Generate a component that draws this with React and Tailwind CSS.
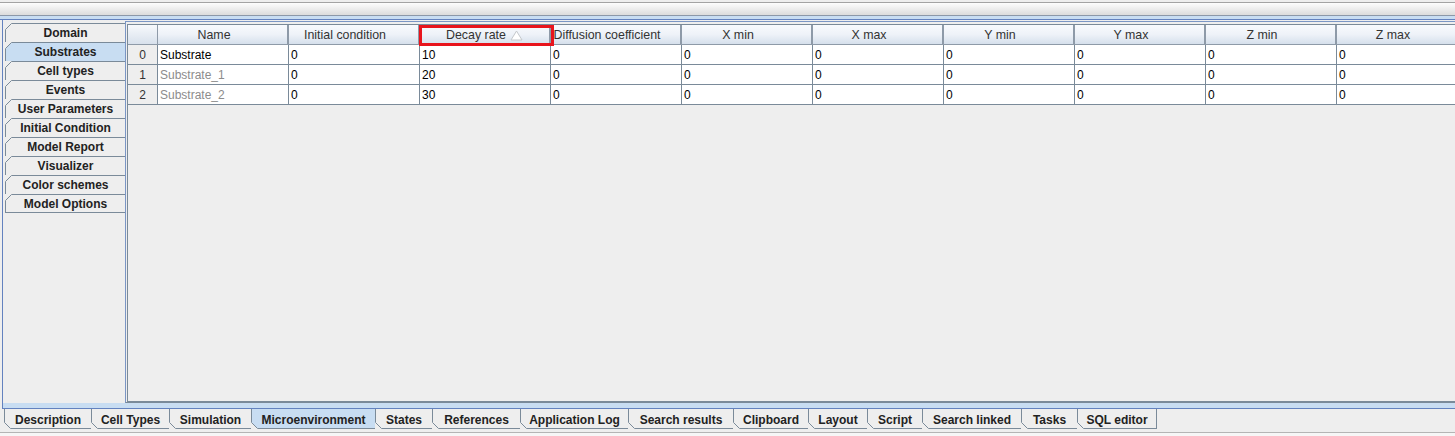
import React from 'react'

const sideTabs = ['Domain', 'Substrates', 'Cell types', 'Events', 'User Parameters', 'Initial Condition', 'Model Report', 'Visualizer', 'Color schemes', 'Model Options']

const bottomTabs = [
  { label: 'Description', w: 'w-[87px]' },
  { label: 'Cell Types', w: 'w-[78px]' },
  { label: 'Simulation', w: 'w-[82px]' },
  { label: 'Microenvironment', w: 'w-[124px]', selected: true },
  { label: 'States', w: 'w-[57px]' },
  { label: 'References', w: 'w-[88px]' },
  { label: 'Application Log', w: 'w-[108px]' },
  { label: 'Search results', w: 'w-[105px]' },
  { label: 'Clipboard', w: 'w-[75px]' },
  { label: 'Layout', w: 'w-[59px]' },
  { label: 'Script', w: 'w-[55px]' },
  { label: 'Search linked', w: 'w-[99px]' },
  { label: 'Tasks', w: 'w-[56px]' },
  { label: 'SQL editor', w: 'w-[80px]' },
]

const columns = ['Name', 'Initial condition', 'Decay rate', 'Diffusion coefficient', 'X min', 'X max', 'Y min', 'Y max', 'Z min', 'Z max']

const rows = [
  { name: 'Substrate', muted: false, decay: '10' },
  { name: 'Substrate_1', muted: true, decay: '20' },
  { name: 'Substrate_2', muted: true, decay: '30' },
]

const TopCorner = () => (
  <svg className="absolute -left-px -top-px" width="7" height="7" viewBox="0 0 7 7">
    <polygon points="0,0 7,0 0,7" fill="#eeeeee" />
    <line x1="0.5" y1="6.5" x2="6.5" y2="0.5" stroke="#7a8a99" strokeWidth="1" />
  </svg>
)

const BottomCorner = () => (
  <svg className="absolute -left-px -bottom-px" width="7" height="7" viewBox="0 0 7 7">
    <polygon points="0,0 0,7 7,7" fill="#eeeeee" />
    <line x1="0.5" y1="0.5" x2="6.5" y2="6.5" stroke="#7a8a99" strokeWidth="1" />
  </svg>
)

const SortIcon = ({ hidden }) => (
  <svg width="13" height="11" viewBox="0 0 13 11" className={hidden ? 'invisible' : ''}>
    <polygon points="6.5,1 12,10 1,10" fill="#ffffff" stroke="#c4c8cc" strokeWidth="1" />
  </svg>
)

const App = () => {
  return (
    <div className="w-[1455px] h-[436px] bg-[#eeeeee] flex flex-col overflow-hidden font-['Liberation_Sans',Arial,sans-serif] text-[12px] text-[#333333]">
      <div className="h-[2px] shrink-0"></div>
      <div className="h-[13px] shrink-0 border-t border-[#a3a3a3] bg-gradient-to-b from-[#fdfdfd] to-[#dcdcdc]"></div>
      <div className="h-px shrink-0 bg-[#8c98a8]"></div>
      <div className="h-[3px] shrink-0 bg-[#c8ddf2]"></div>
      <div className="h-px shrink-0 bg-[#6382bf]"></div>

      <div className="h-[383px] shrink-0 flex">
        <div className="w-[2px] shrink-0"></div>
        <div className="w-px shrink-0 bg-[#6382bf]"></div>

        <div className="w-[122px] shrink-0 pt-[3px] pl-[2px] flex flex-col">
          {sideTabs.map((t, i) => (
            <div
              key={t}
              className={
                'relative h-[19px] w-[120px] border-t border-l border-[#7a8a99] flex items-center justify-center font-bold text-[#222222] ' +
                (t === 'Substrates' ? 'bg-[#c8ddf2] ' : 'bg-[#eeeeee] ') +
                (i === sideTabs.length - 1 ? 'border-b' : '')
              }
            >
              <TopCorner />
              {t}
            </div>
          ))}
        </div>

        <div className="flex-1 mt-px h-[382px] border-t border-l border-[#7b96c4] border-b-[#7a8a99] border-b pl-px pt-[2px] flex flex-col">
          <div className="flex-1 border border-[#7a8a99] bg-[#eeeeee] overflow-hidden">
            <div className="flex h-[20px]">
              <div className="w-[30px] shrink-0 border-r border-b border-[#8e9aa8] bg-gradient-to-b from-[#f7f9fc] to-[#d8e1ec]"></div>
              {columns.map((c) => (
                <div
                  key={c}
                  className="relative w-[131px] shrink-0 border-r-2 border-b border-[#8e9aa8] bg-gradient-to-b from-[#f8fafd] via-[#eef2f8] to-[#d6e0ec] flex items-center justify-center gap-[4px] pt-[2px] text-[#333333] text-[12.4px] whitespace-nowrap"
                >
                  <span>{c}</span>
                  <SortIcon hidden={c !== 'Decay rate'} />
                  {c === 'Decay rate' && (
                    <div className="absolute -left-px top-0 w-[135px] h-[21px] border-[3px] border-[#e8141c] z-10"></div>
                  )}
                </div>
              ))}
            </div>
            {rows.map((r, i) => (
              <div key={r.name} className="flex h-[20px]">
                <div className="w-[30px] shrink-0 border-r border-b border-[#7a8a99] bg-[#eeeeee] flex items-center justify-center pt-px text-[#333333]">
                  {i}
                </div>
                {columns.map((c) => {
                  let v = '0'
                  if (c === 'Name') v = r.name
                  if (c === 'Decay rate') v = r.decay
                  const muted = c === 'Name' && r.muted
                  return (
                    <div
                      key={c}
                      className={
                        'w-[131px] shrink-0 border-r border-b border-[#7a8a99] bg-white flex items-center pl-[2px] pt-px ' +
                        (muted ? 'text-[#8c8c8c]' : 'text-black')
                      }
                    >
                      {v}
                    </div>
                  )
                })}
              </div>
            ))}
          </div>
        </div>
      </div>

      <div className="h-[5px] shrink-0 flex">
        <div className="w-[2px] shrink-0"></div>
        <div className="w-px shrink-0 bg-[#6382bf]"></div>
        <div className="flex-1 bg-[#c8ddf2]"></div>
      </div>
      <div className="h-px shrink-0 ml-[2px] bg-[#6382bf]"></div>

      <div className="h-[20px] shrink-0 flex pl-[4px]">
        {bottomTabs.map((t, i) => (
          <div
            key={t.label}
            className={
              'relative h-[20px] shrink-0 border-l border-b border-[#7a8a99] flex items-center justify-center pt-[3px] font-bold text-[#222222] ' +
              t.w + ' ' +
              (t.selected ? 'bg-[#c8ddf2] ' : 'bg-[#eeeeee] ') +
              (i === bottomTabs.length - 1 ? 'border-r' : '')
            }
          >
            <BottomCorner />
            {t.label}
          </div>
        ))}
      </div>

      <div className="h-[3px] shrink-0"></div>
      <div className="h-px shrink-0 bg-[#b4b4b4]"></div>
      <div className="flex-1 bg-[#f6f6f6]"></div>
    </div>
  )
}

export default App
